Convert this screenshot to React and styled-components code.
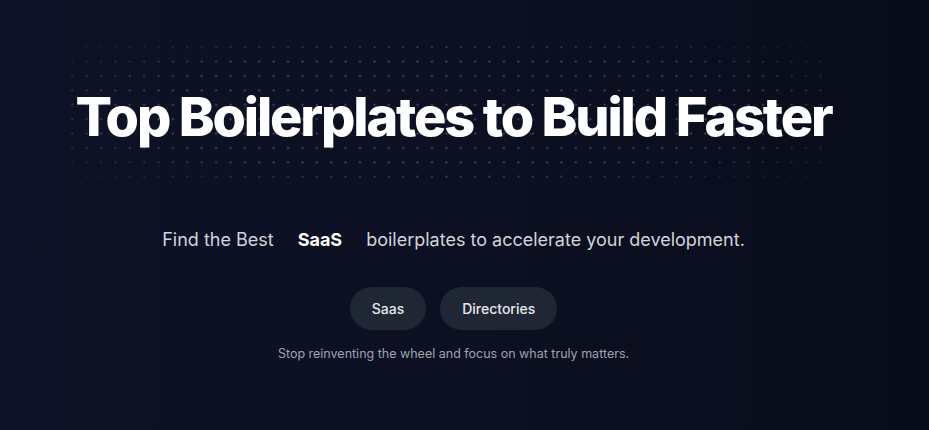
import React from "react";
import styled, { createGlobalStyle } from "styled-components";

const Global = createGlobalStyle`
  html, body { margin: 0; padding: 0; }
  body {
    background: #0b0f1f;
    font-family: Inter, "Noto Sans", sans-serif;
  }
`;

const Page = styled.main`
  min-height: 430px;
  box-sizing: border-box;
  background: linear-gradient(90deg, #0e1226 0%, #0c1022 50%, #080c1a 100%);
  padding: 40px 22px 40px 0;
  display: flex;
  flex-direction: column;
  align-items: center;
`;

const Heading = styled.h1`
  position: relative;
  isolation: isolate;
  margin: 0;
  display: inline-block;
  padding: 50px 0 40px;
  font-size: 54px;
  line-height: 54px;
  font-weight: 800;
  letter-spacing: -0.04em;
  color: #ffffff;
  white-space: nowrap;

  &::before {
    content: "";
    position: absolute;
    inset: 0 0 0 -10px;
    z-index: -1;
    background-image: radial-gradient(circle, rgba(148, 163, 184, 0.32) 1px, transparent 1.3px);
    background-size: 14.4px 14.4px;
    background-position: 0 0;
    -webkit-mask-image: radial-gradient(ellipse 70% 75% at 50% 50%, #000 55%, transparent 100%);
    mask-image: radial-gradient(ellipse 70% 75% at 50% 50%, #000 55%, transparent 100%);
  }
`;

const Subtitle = styled.p`
  margin: 42px 0 0;
  display: flex;
  align-items: center;
  gap: 24px;
  font-size: 18px;
  line-height: 28px;
  color: #d1d5db;
`;

const Highlight = styled.strong`
  font-weight: 700;
  color: #ffffff;
`;

const Buttons = styled.div`
  margin-top: 33px;
  display: flex;
  gap: 14px;
`;

const Pill = styled.button`
  height: 43px;
  padding: 0 22px;
  border: none;
  border-radius: 999px;
  background: #1f2735;
  color: #e5e7eb;
  font-family: Inter, "Noto Sans", sans-serif;
  font-size: 14px;
  font-weight: 500;
  cursor: pointer;
`;

const Note = styled.p`
  margin: 16px 0 0;
  font-size: 12.5px;
  line-height: 16px;
  color: #9ca3af;
`;

export default function App() {
  return (
    <>
      <Global />
      <Page>
        <Heading>Top Boilerplates to Build Faster</Heading>
        <Subtitle>
          <span>Find the Best</span>
          <Highlight>SaaS</Highlight>
          <span>boilerplates to accelerate your development.</span>
        </Subtitle>
        <Buttons>
          <Pill>Saas</Pill>
          <Pill>Directories</Pill>
        </Buttons>
        <Note>Stop reinventing the wheel and focus on what truly matters.</Note>
      </Page>
    </>
  );
}
